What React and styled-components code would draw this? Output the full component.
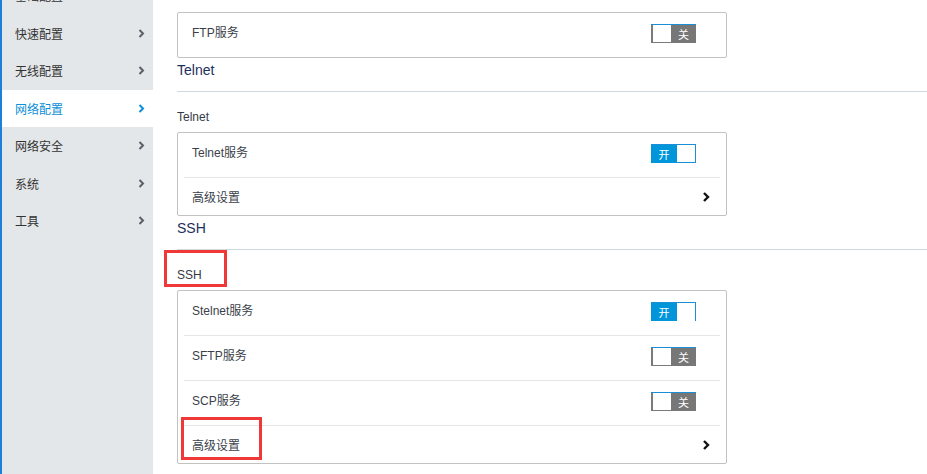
import React from "react";
import styled, { createGlobalStyle } from "styled-components";

const GlobalStyle = createGlobalStyle`
  html, body { margin: 0; padding: 0; background: #fff; }
  body {
    font-family: "Liberation Sans", "Noto Sans CJK SC", sans-serif;
    font-size: 12px;
    color: #333;
  }
  * { box-sizing: border-box; }
`;

const Page = styled.div`
  display: flex;
  width: 927px;
  height: 474px;
  overflow: hidden;
  background: #fff;
`;

const Sidebar = styled.nav`
  flex: 0 0 153px;
  background: #e4e7e9;
  border-left: 2px solid #1f7fd8;
  overflow: hidden;
`;

const NavList = styled.ul`
  list-style: none;
  margin: -23px 0 0;
  padding: 0;
`;

const NavItem = styled.li`
  display: flex;
  align-items: center;
  justify-content: space-between;
  height: 37.5px;
  padding: 0 8px 0 13px;
  font-family: "Noto Sans CJK SC", sans-serif;
  font-size: 12px;
  color: ${(p) => (p.$active ? "#0b8fd8" : "#333")};
  background: ${(p) => (p.$active ? "#fff" : "transparent")};
`;

const Main = styled.main`
  flex: 1;
  padding: 12px 0 0 24px;
  min-width: 0;
`;

const Card = styled.div`
  width: 550px;
  border: 1px solid #c2c2c2;
  border-radius: 2px;
  background: #fff;
`;

const Row = styled.div`
  position: relative;
  display: flex;
  align-items: center;
  justify-content: space-between;
  height: ${(p) => (p.$short ? "38px" : p.$first ? "44px" : "45px")};
  margin: 0 6px;
  padding: 0 0 ${(p) => (p.$short ? "0" : "4px")} 8px;
  border-top: ${(p) => (p.$first ? "none" : "1px solid #e6e6e6")};
  color: #3b3f4a;
  font-size: 12px;
`;

const RowLabel = styled.span`
  font-family: "Liberation Sans", "Noto Sans CJK SC", sans-serif;
  font-size: 12px;
  margin-top: ${(p) => (p.$up ? "-3px" : "-1px")};
`;

const SwitchBox = styled.div`
  display: flex;
  width: 45px;
  height: 19px;
  margin-right: 24px;
  border-top: 1px solid #1a8fd6;
`;

const SwitchLabel = styled.span`
  display: flex;
  align-items: center;
  justify-content: center;
  width: ${(p) => (p.$on ? "26px" : "25px")};
  background: ${(p) => (p.$on ? "#0096d9" : "#777")};
  color: #fff;
  font-family: "Noto Sans CJK SC", sans-serif;
  font-size: 11px;
`;

const SwitchKnob = styled.span`
  width: ${(p) => (p.$on ? "19px" : "20px")};
  background: #fff;
  border-left: ${(p) => (p.$on ? "none" : "2px solid #7a7a7a")};
  border-right: ${(p) => (p.$on ? "1px solid #1a8fd6" : "none")};
  border-bottom: ${(p) =>
    p.$noBottom ? "none" : p.$on ? "1px solid #1a8fd6" : "1px solid #7a7a7a"};
`;

const SectionTitle = styled.h2`
  margin: 0;
  height: 34px;
  padding: 0;
  font-family: "Liberation Sans", sans-serif;
  font-weight: normal;
  font-size: 14px;
  line-height: 24px;
  color: #1d2f5e;
  border-bottom: 1px solid #cdd9e1;
`;

const SubTitle = styled.h3`
  position: relative;
  margin: 0;
  height: 40px;
  padding-top: 17px;
  font-family: "Liberation Sans", sans-serif;
  font-weight: normal;
  font-size: 12px;
  line-height: 16px;
  color: #333a44;
`;

const Annotation = styled.span`
  position: absolute;
  left: ${(p) => p.$left}px;
  top: ${(p) => p.$top}px;
  width: ${(p) => p.$w}px;
  height: ${(p) => p.$h}px;
  border: 3px solid #f03838;
  pointer-events: none;
`;

const NavChevron = ({ active }) => (
  <svg width="7" height="9" viewBox="0 0 7 9">
    <polyline
      points="1.5,1 5,4.5 1.5,8"
      fill="none"
      stroke={active ? "#0b8fd8" : "#5a5f6a"}
      strokeWidth="2"
    />
  </svg>
);

const ChevronWrap = styled.span`
  display: flex;
  margin-right: 10px;
`;

const RowChevron = () => (
  <ChevronWrap>
    <svg width="7" height="10" viewBox="0 0 7 10">
      <polyline points="1,1 5,5 1,9" fill="none" stroke="#111" strokeWidth="2.4" />
    </svg>
  </ChevronWrap>
);

const Toggle = ({ on, noBottom }) =>
  on ? (
    <SwitchBox>
      <SwitchLabel $on>开</SwitchLabel>
      <SwitchKnob $on $noBottom={noBottom} />
    </SwitchBox>
  ) : (
    <SwitchBox>
      <SwitchKnob />
      <SwitchLabel>关</SwitchLabel>
    </SwitchBox>
  );

const navItems = ["基础配置", "快速配置", "无线配置", "网络配置", "网络安全", "系统", "工具", "", "", "", "", "", ""];

export default function App() {
  return (
    <>
      <GlobalStyle />
      <Page>
        <Sidebar>
          <NavList>
            {navItems.map((t, i) =>
              t ? (
                <NavItem key={i} $active={t === "网络配置"}>
                  <span>{t}</span>
                  <NavChevron active={t === "网络配置"} />
                </NavItem>
              ) : (
                <NavItem key={i} />
              )
            )}
          </NavList>
        </Sidebar>
        <Main>
          <Card>
            <Row $first>
              <RowLabel $up>FTP服务</RowLabel>
              <Toggle on={false} />
            </Row>
          </Card>

          <SectionTitle>Telnet</SectionTitle>
          <SubTitle>Telnet</SubTitle>
          <Card>
            <Row $first>
              <RowLabel $up>Telnet服务</RowLabel>
              <Toggle on />
            </Row>
            <Row $short>
              <RowLabel>高级设置</RowLabel>
              <RowChevron />
            </Row>
          </Card>

          <SectionTitle>SSH</SectionTitle>
          <SubTitle>
            SSH
            <Annotation $left={-13} $top={0} $w={63} $h={37} />
          </SubTitle>
          <Card>
            <Row $first>
              <RowLabel $up>Stelnet服务</RowLabel>
              <Toggle on noBottom />
            </Row>
            <Row>
              <RowLabel $up>SFTP服务</RowLabel>
              <Toggle on={false} />
            </Row>
            <Row>
              <RowLabel $up>SCP服务</RowLabel>
              <Toggle on={false} />
            </Row>
            <Row $short>
              <RowLabel>高级设置</RowLabel>
              <RowChevron />
              <Annotation $left={-3} $top={-9} $w={81} $h={43} />
            </Row>
          </Card>
        </Main>
      </Page>
    </>
  );
}
